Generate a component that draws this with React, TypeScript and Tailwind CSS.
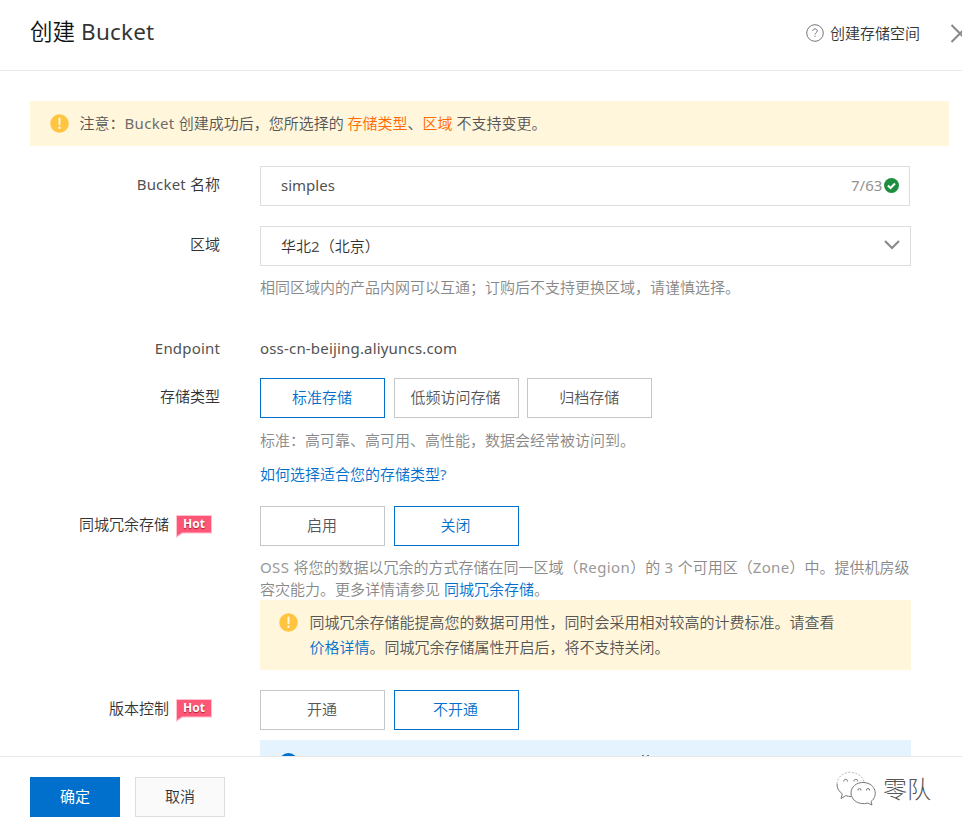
import React from "react";

type ChoiceProps = { label: string; active?: boolean };

function Choice({ label, active }: ChoiceProps) {
  return (
    <button
      className={
        "h-10 w-[125px] border bg-white pb-[2px] pr-px text-center leading-[35px] " +
        (active ? "border-[#0070cc] text-[#0070cc]" : "border-[#c6c6c6] text-[#555]")
      }
    >
      {label}
    </button>
  );
}

/* Latin runs use the regular face, softened to sit evenly beside the CJK text. */
function Latin({ children, className }: { children: React.ReactNode; className?: string }) {
  return <span className={"font-normal opacity-85 " + (className ?? "tracking-[0.18px]")}>{children}</span>;
}

function Row({ label, hot, className, children }: {
  label: React.ReactNode;
  hot?: boolean;
  className?: string;
  children: React.ReactNode;
}) {
  return (
    <div className={"flex " + (className ?? "")}>
      <div
        className={
          "flex h-10 shrink-0 justify-end whitespace-nowrap leading-[36px] text-[#333] " +
          (hot ? "w-[212px] mr-12" : "w-[220px] mr-10")
        }
      >
        <span>{label}</span>
        {hot && <HotTag />}
      </div>
      <div className="w-[651px]">{children}</div>
    </div>
  );
}

function HotTag() {
  return (
    <span className="relative ml-[7px] mt-[9px] block h-[23px] w-9">
      <svg className="absolute inset-0" width="36" height="23" viewBox="0 0 36 23">
        <path d="M0 0H36V18.5H7L0 23Z" fill="#ffc3cf" />
        <path d="M1 1H35V17.5H6L1 21Z" fill="#ff5577" />
      </svg>
      <span className="absolute inset-0 text-center font-['Open_Sans'] text-[12px] font-bold leading-[18px] text-white [text-shadow:0_1px_1px_rgba(80,0,20,0.6)]">
        Hot
      </span>
    </span>
  );
}

function Alert({ className }: { className?: string }) {
  return (
    <svg className={"shrink-0 " + (className ?? "")} width="19" height="19" viewBox="0 0 19 19">
      <circle cx="9.5" cy="9.5" r="9.3" fill="#ffc440" />
      <path d="M9.5 4.6V10.2" stroke="#fff6dc" strokeWidth="2" strokeLinecap="round" />
      <circle cx="9.5" cy="13.8" r="1.3" fill="#fff6dc" />
    </svg>
  );
}

function WeChat() {
  return (
    <svg className="mt-px" width="42" height="36" viewBox="0 0 42 36" fill="none" stroke="#777" strokeWidth="1">
      <path d="M15 25.500C13 25.500 11.400 25.200 9.800 24.600L5 27.500L6.300 22.800C3 20.500 1 17.500 1 13" />
      <path d="M1 13C1 8.500 4 4.500 8.500 2.500C17-1 27 4 28 11" strokeDasharray="2 1.500" stroke="#bbb" />
      <path d="M28 11.500C20.500 11 15 16 15 22C15 29.500 23.500 34.500 31.500 32L36 34L35 30.500C42.500 25 40 12.500 28 11.500Z" />
      <path d="M7.800 10.500V9.800A1.900 1.900 0 0 1 11.500 9.800V10.500M18 10.500V9.800A1.900 1.900 0 0 1 21.700 9.800V10.500M22 19.500V19A1.500 1.500 0 0 1 25 19V19.500M30.500 19.500V19A1.500 1.500 0 0 1 33.500 19V19.500" />
    </svg>
  );
}

export default function App() {
  return (
    <div className="flex h-[832px] w-[962px] flex-col overflow-hidden bg-white font-['Noto_Sans','Noto_Sans_CJK_SC',sans-serif] text-[15px] font-[350] text-[#333]">
      <header className="flex h-[71px] shrink-0 border-b border-[#e9e9e9] pl-[30px]">
        <h1 className="w-[776px] shrink-0 text-[22.500px] leading-[64px] text-[#111]">
          创建<Latin className="tracking-[0.2px]"> Bucket</Latin>
        </h1>
        <svg className="mt-6 shrink-0" width="18" height="18" viewBox="0 0 18 18" fill="none" stroke="#777">
          <circle cx="9" cy="9" r="8.300" />
          <path d="M6.700 7C6.700 4.200 11.300 4.200 11.300 7C11.300 8.600 9 8.700 9 10.600M9 11.800V13" />
        </svg>
        <span className="ml-[6px] w-[120px] shrink-0 leading-[66px]">创建存储空间</span>
        <svg className="mt-6 shrink-0" width="19" height="19" viewBox="0 0 19 19" stroke="#888" strokeWidth="2">
          <path d="M1.500 1L18.500 18M18.500 1L1.500 18" />
        </svg>
      </header>

      <main className="h-[685px] shrink-0 overflow-hidden pt-[30px]">
        <div className="ml-[30px] flex h-[45px] w-[919px] bg-[#fff6db] pl-[19.500px] text-[#555]">
          <Alert className="mt-[13px]" />
          <p className="ml-[11px] whitespace-nowrap leading-[45px]">
            注意：<Latin className="tracking-[0.3px]">Bucket </Latin>创建成功后，您所选择的 <span className="text-[#ff6a00]">存储类型</span>、
            <span className="text-[#ff6a00]">区域</span> 不支持变更。
          </p>
        </div>

        <Row label={<><Latin>Bucket </Latin>名称</>} className="mt-5 h-[60px]">
          <div className="flex h-10 w-[650px] border border-[#dedede] pl-5 leading-[37px]">
            <span className="w-[570px]"><Latin className="tracking-normal">simples</Latin></span>
            <span className="w-[33px] text-[#808080]"><Latin className="tracking-normal">7/63</Latin></span>
            <svg className="mt-[11px] shrink-0" width="15" height="15" viewBox="0 0 15 15">
              <circle cx="7.500" cy="7.500" r="7.500" fill="#1e8e3e" />
              <path d="M3.900 7.600L6.500 10L11 5.500" stroke="white" strokeWidth="2" fill="none" />
            </svg>
          </div>
        </Row>

        <Row label="区域" className="h-[102px]">
          <div className="flex h-10 justify-between border border-[#dedede] pl-5 pr-[10px] leading-[38px]">
            <span>华北<Latin>2</Latin>（北京）</span>
            <svg className="mt-[13px]" width="16" height="10" viewBox="0 0 16 10" fill="none" stroke="#888" strokeWidth="2">
              <path d="M1 1L8 8L15 1" />
            </svg>
          </div>
          <p className="mt-[10px] leading-[22px] text-[#888]">相同区域内的产品内网可以互通；订购后不支持更换区域，请谨慎选择。</p>
        </Row>

        <Row label={<Latin>Endpoint</Latin>} className="mt-[2px] h-12">
          <p className="leading-[36px]"><Latin>oss-cn-beijing.aliyuncs.com</Latin></p>
        </Row>

        <Row label="存储类型" className="h-32">
          <div className="flex gap-[8.600px]">
            <Choice label="标准存储" active />
            <Choice label="低频访问存储" />
            <Choice label="归档存储" />
          </div>
          <p className="mt-[11px] leading-[22px] text-[#888]">标准：高可靠、高可用、高性能，数据会经常被访问到。</p>
          <p className="mt-3 leading-[22px] text-[#0070cc]">如何选择适合您的存储类型<Latin>?</Latin></p>
        </Row>

        <Row label="同城冗余存储" hot className="h-[184px]">
          <div className="flex gap-[8.600px]">
            <Choice label="启用" />
            <Choice label="关闭" active />
          </div>
          <p className="mt-[10px] whitespace-nowrap leading-[22px] text-[#888]">
            <Latin className="tracking-[0.38px]">OSS </Latin>将您的数据以冗余的方式存储在同一区域（<Latin className="tracking-[0.38px]">Region</Latin>）的<Latin className="tracking-[0.38px]"> 3 </Latin>个可用区（<Latin className="tracking-[0.38px]">Zone</Latin>）中。提供机房级
            <br />
            容灾能力。更多详情请参见 <span className="text-[#0070cc]">同城冗余存储</span>。
          </p>
          <div className="flex h-[70px] bg-[#fff6db] pl-[19px] text-[#555]">
            <Alert className="mt-[13px]" />
            <p className="ml-[11.500px] mt-[10px] whitespace-nowrap leading-[25px]">
              同城冗余存储能提高您的数据可用性，同时会采用相对较高的计费标准。请查看
              <br />
              <span className="text-[#0070cc]">价格详情</span>。同城冗余存储属性开启后，将不支持关闭。
            </p>
          </div>
        </Row>

        <Row label="版本控制" hot className="h-[66px]">
          <div className="flex gap-[8.600px]">
            <Choice label="开通" />
            <Choice label="不开通" active />
          </div>
          <div className="mt-[10px] flex h-4 items-start overflow-hidden bg-[#e5f3ff] pl-[19px]">
            <svg className="mt-[13px] shrink-0" width="19" height="19" viewBox="0 0 19 19">
              <circle cx="9.500" cy="9.500" r="9.500" fill="#0070cc" />
            </svg>
            <svg className="ml-[343px] mt-[14px]" width="10" height="2">
              <path d="M1 1.500H3M6 1.500H8" stroke="#777" />
            </svg>
          </div>
        </Row>
      </main>

      <footer className="flex h-[76px] shrink-0 border-t border-[#e9e9e9] pl-[30px] pt-5">
        <button className="h-10 w-[90px] bg-[#0070cc] pb-[2px] leading-[38px] font-normal text-white">确定</button>
        <button className="ml-[15px] h-10 w-[90px] border border-[#dedede] bg-[#fafafa] pb-[2px] leading-[35px]">取消</button>
        <div className="ml-[611px] mt-[-7px] flex">
          <WeChat />
          <span className="ml-[5px] text-[24px] leading-[38px] font-light text-[#555]">零队</span>
        </div>
      </footer>
    </div>
  );
}
